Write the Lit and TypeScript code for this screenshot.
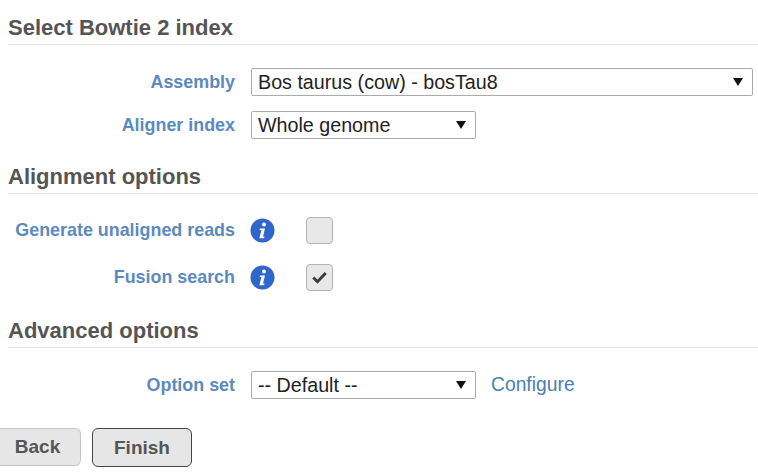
import {html, css, LitElement} from 'lit';
import {customElement} from 'lit/decorators.js';

@customElement('app-root')
export class AppRoot extends LitElement {
  static styles = css`
    :host {
      display: block;
      width: 758px;
      height: 473px;
      overflow: hidden;
      background: #fff;
      font-family: 'Liberation Sans', Arial, sans-serif;
      color: #222;
    }

    .page {
      padding: 15px 0 0 8px;
    }

    h2 {
      margin: 0;
      height: 29px;
      line-height: 26px;
      font-size: 22px;
      font-weight: bold;
      color: #555;
      border-bottom: 1px solid #e2e2e2;
    }

    .section {
      display: flex;
      flex-direction: column;
      gap: 15px;
      padding-top: 23px;
      margin-bottom: 25px;
    }

    .checks {
      gap: 19px;
      padding-top: 22px;
      margin-bottom: 27px;
    }

    .checks .label {
      padding-top: 1px;
    }

    .row {
      display: flex;
      align-items: center;
      height: 28px;
    }

    .label {
      width: 227px;
      flex: none;
      text-align: right;
      font-size: 17.9px;
      font-weight: bold;
      color: #5b8ac0;
      white-space: nowrap;
    }

    .select {
      display: flex;
      align-items: center;
      justify-content: space-between;
      height: 28px;
      box-sizing: border-box;
      margin-left: 16px;
      padding: 0 9px 0 6px;
      border: 1px solid #aaa;
      border-radius: 2px;
      font-size: 19.7px;
      color: #222;
      background: #fff;
    }

    .wide { width: 502px; }
    .mid { width: 225px; }

    .arrow {
      width: 10px;
      height: 8px;
      flex: none;
    }

    .info {
      width: 25px;
      height: 25px;
      flex: none;
      margin-left: 15px;
    }

    .check {
      width: 27px;
      height: 27px;
      box-sizing: border-box;
      flex: none;
      margin-left: 31px;
      border: 1px solid #b4b4b4;
      border-radius: 4px;
      background: #e8e8e8;
      display: flex;
      align-items: center;
      justify-content: center;
    }

    .check svg {
      width: 15px;
      height: 13px;
    }

    a {
      margin-left: 15px;
      font-size: 19.3px;
      color: #4a7fb5;
      text-decoration: none;
    }

    .actions {
      display: flex;
      align-items: flex-start;
      gap: 11px;
      margin: 29px 0 0 -8px;
    }

    button {
      height: 39px;
      box-sizing: border-box;
      padding: 0;
      border-radius: 6px;
      background: #e6e6e6;
      font-family: inherit;
      font-size: 19px;
      font-weight: bold;
      color: #555;
    }

    .back {
      width: 81px;
      height: 38px;
      padding-right: 5px;
      border: 1px solid #c4c4c4;
      border-left: none;
      border-radius: 0 6px 6px 0;
    }

    .finish {
      width: 100px;
      border: 1.5px solid #444;
    }
  `;

  arrow() {
    return html`<svg class="arrow" viewBox="0 0 10 8"><path d="M0 0h10L5 8z" fill="#111"/></svg>`;
  }

  info() {
    return html`<svg class="info" viewBox="0 0 25 25">
      <circle cx="12.5" cy="12.5" r="12" fill="#2f66cc"/>
      <circle cx="14" cy="6.6" r="2" fill="#fff"/>
      <path d="M10 10.4h5l-2 8h1.6l-.5 1.9H9.4l2-8.2H9.6z" fill="#fff"/>
    </svg>`;
  }

  render() {
    return html`
      <div class="page">
        <h2>Select Bowtie 2 index</h2>
        <div class="section">
          <div class="row">
            <span class="label">Assembly</span>
            <div class="select wide"><span>Bos taurus (cow) - bosTau8</span>${this.arrow()}</div>
          </div>
          <div class="row">
            <span class="label">Aligner index</span>
            <div class="select mid"><span>Whole genome</span>${this.arrow()}</div>
          </div>
        </div>

        <h2>Alignment options</h2>
        <div class="section checks">
          <div class="row">
            <span class="label">Generate unaligned reads</span>
            ${this.info()}
            <div class="check"></div>
          </div>
          <div class="row">
            <span class="label">Fusion search</span>
            ${this.info()}
            <div class="check">
              <svg viewBox="0 0 15 13"><path d="M1.3 6.5l4.2 4.2 8.2-8.8" fill="none" stroke="#3c3c3c" stroke-width="3"/></svg>
            </div>
          </div>
        </div>

        <h2>Advanced options</h2>
        <div class="section">
          <div class="row">
            <span class="label">Option set</span>
            <div class="select mid"><span>-- Default --</span>${this.arrow()}</div>
            <a href="#">Configure</a>
          </div>
        </div>

        <div class="actions">
          <button class="back">Back</button>
          <button class="finish">Finish</button>
        </div>
      </div>
    `;
  }
}
